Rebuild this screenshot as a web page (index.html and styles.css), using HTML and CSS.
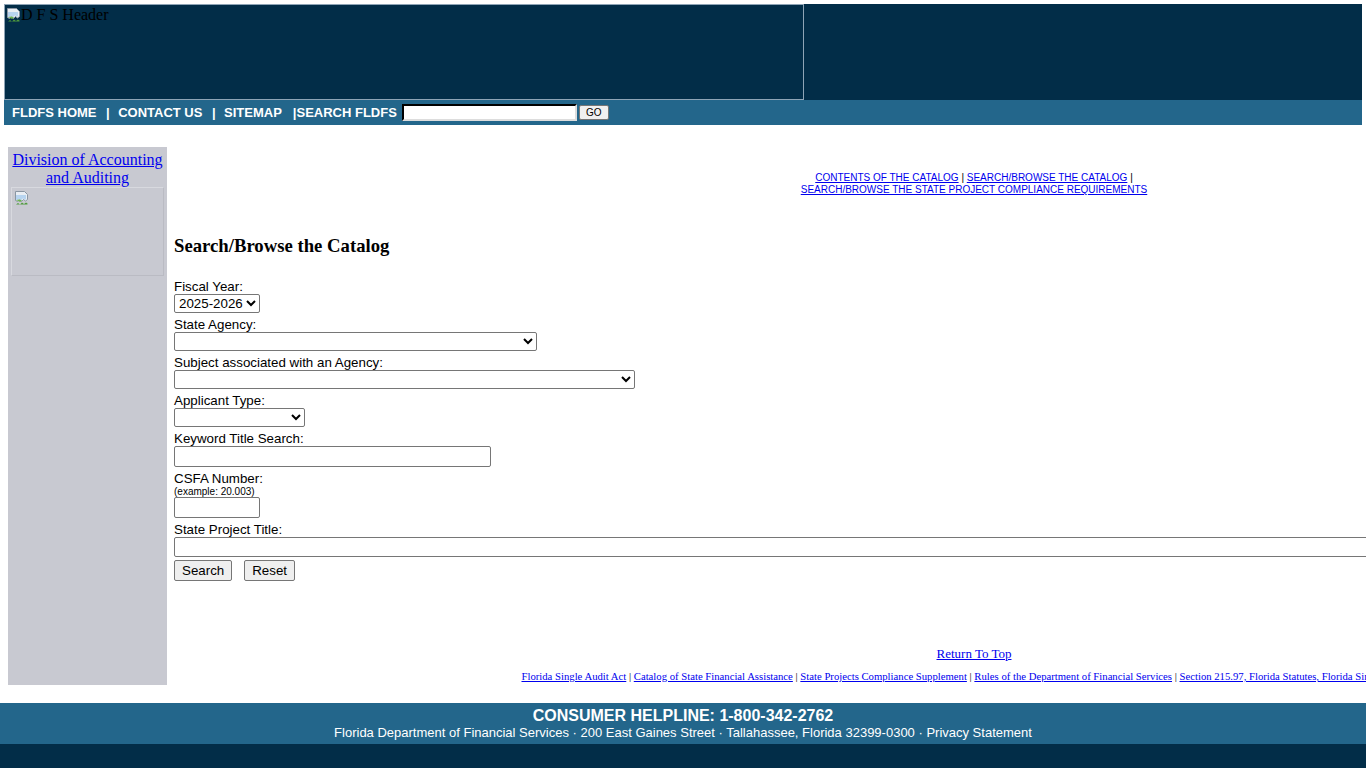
FILE: index.html
```html
<!DOCTYPE html>
<html lang="en">
<head>
    <meta charset="UTF-8">
    <title>Search/Browse the Catalog</title>
    <link rel="stylesheet" href="styles.css">
</head>
<body>
    <div class="top">
        <div class="banner">
            <div class="banner-img">
                <svg class="broken" width="16" height="16" viewBox="0 0 16 16">
                    <path d="M1.5 1.5h9l3 3v5l-2 1.5-2-1.5-2 2-2-1.5-2 1.5-2-1z" fill="#e9eef4" stroke="#8a96a3"/>
                    <path d="M2 5h10v4l-1 .7-2-1.4-2 2-2-1.4-2 1.4-1-.5z" fill="#b7d4f0"/>
                    <path d="M2 14.5l2-1.5 2 1.5 2-2 2 1.5 2-1.5 1.5 1v1H2z" fill="#4f9a3c"/>
                    <path d="M2 10.5c2-1.5 4-1.5 6 0l-2 1.6-2-1.4z" fill="#6cb34f"/>
                </svg>
                <span>D F S Header</span>
            </div>
        </div>
        <div class="nav">
            <a href="#">FLDFS HOME</a><span class="sep">|</span><a href="#">CONTACT US</a><span class="sep">|</span><a href="#">SITEMAP</a><span class="sep last">|</span><span>SEARCH FLDFS</span>
            <input class="nav-search" type="text">
            <button class="go">GO</button>
        </div>
    </div>

    <div class="page">
        <div class="sidebar">
            <a href="#" class="division">Division of Accounting and Auditing</a>
            <div class="side-img">
                <svg class="broken" width="16" height="16" viewBox="0 0 16 16">
                    <path d="M1.5 1.5h9l3 3v5l-2 1.5-2-1.5-2 2-2-1.5-2 1.5-2-1z" fill="#e9eef4" stroke="#8a96a3"/>
                    <path d="M2 5h10v4l-1 .7-2-1.4-2 2-2-1.4-2 1.4-1-.5z" fill="#b7d4f0"/>
                    <path d="M2 14.5l2-1.5 2 1.5 2-2 2 1.5 2-1.5 1.5 1v1H2z" fill="#4f9a3c"/>
                    <path d="M2 10.5c2-1.5 4-1.5 6 0l-2 1.6-2-1.4z" fill="#6cb34f"/>
                </svg>
            </div>
        </div>

        <div class="main">
            <div class="catalog-links">
                <a href="#">CONTENTS OF THE CATALOG</a> | <a href="#">SEARCH/BROWSE THE CATALOG</a> |<br>
                <a href="#">SEARCH/BROWSE THE STATE PROJECT COMPLIANCE REQUIREMENTS</a>
            </div>

            <h3>Search/Browse the Catalog</h3>

            <form class="search-form">
                <label>Fiscal Year:</label>
                <select class="sel-year"><option>2025-2026</option></select>

                <label>State Agency:</label>
                <select class="sel-agency"><option></option></select>

                <label>Subject associated with an Agency:</label>
                <select class="sel-subject"><option></option></select>

                <label>Applicant Type:</label>
                <select class="sel-applicant"><option></option></select>

                <label>Keyword Title Search:</label>
                <input class="in-keyword" type="text">

                <label>CSFA Number:</label>
                <span class="hint">(example: 20.003)</span>
                <input class="in-csfa" type="text">

                <label>State Project Title:</label>
                <input class="in-title" type="text">

                <div class="buttons">
                    <button type="button">Search</button>
                    <button type="reset">Reset</button>
                </div>
            </form>

            <div class="return-top"><a href="#">Return To Top</a></div>

            <div class="bottom-links">
                <a href="#">Florida Single Audit Act</a> | <a href="#">Catalog of State Financial Assistance</a> | <a href="#">State Projects Compliance Supplement</a> | <a href="#">Rules of the Department of Financial Services</a> | <a href="#">Section 215.97, Florida Statutes, Florida Single Audit Act</a>
            </div>
        </div>
    </div>

    <div class="footer">
        <div class="helpline">CONSUMER HELPLINE: 1-800-342-2762</div>
        <div class="address">Florida Department of Financial Services · 200 East Gaines Street · Tallahassee, Florida 32399-0300 · Privacy Statement</div>
    </div>
    <div class="footer-base"></div>
</body>
</html>
```

FILE: styles.css
```css
body {
    margin: 0;
    font-family: "Liberation Serif", "Times New Roman", serif;
    font-size: 16px;
    color: #000;
    background: #fff;
}
a {
    color: #0000ee;
}
.top {
    margin: 4px 4px 0 4px;
    background-color: #022d48;
}
.banner {
    height: 96px;
}
.banner-img {
    width: 798px;
    height: 94px;
    border: 1px solid #8ea4b6;
    display: flex;
    align-items: flex-start;
}
.banner-img span {
    line-height: 20px;
    margin-left: -1px;
    color: #000;
}
.broken {
    display: block;
    margin: 2px 0 0 1px;
}
.nav {
    background-color: #23668b;
    height: 25px;
    display: flex;
    align-items: center;
    padding-left: 8px;
    font-family: "Liberation Sans", Arial, sans-serif;
    font-size: 13px;
    font-weight: bold;
    color: #fff;
}
.nav a {
    color: #fff;
    text-decoration: none;
}
.nav .sep {
    margin: 0 8.5px 0 9.5px;
}
.nav .sep.last {
    margin: 0 0 0 11px;
}
.nav-search {
    width: 175px;
    height: 17px;
    box-sizing: border-box;
    margin-left: 5px;
    border: 2px inset #777;
    border-color: #222 #ddd #ddd #222;
    background: #fff;
    padding: 0;
}
.go {
    margin-left: 2px;
    width: 30px;
    height: 15px;
    padding: 0;
    font-size: 10px;
    font-family: "Liberation Sans", Arial, sans-serif;
    background: #f0f0f0;
    border: 1px solid #767676;
    border-radius: 2px;
    color: #000;
}
.page {
    margin-top: 22px;
    display: flex;
    align-items: flex-start;
    overflow: hidden;
}
.sidebar {
    margin-left: 8px;
    width: 159px;
    flex-shrink: 0;
    height: 538px;
    background-color: #c8c9d1;
    display: flex;
    flex-direction: column;
    align-items: center;
}
.division {
    text-align: center;
    line-height: 18px;
    margin-top: 4px;
    padding: 0 4px;
}
.side-img {
    margin-top: 0;
    width: 151px;
    height: 87px;
    border: 1px solid #d8d9df;
    border-right-color: #babbc3;
    border-bottom-color: #babbc3;
}
.side-img .broken {
    margin: 2px 0 0 2px;
}
.main {
    width: 1600px;
    height: 538px;
    flex-shrink: 0;
    padding-left: 7px;
    font-family: "Liberation Sans", Arial, sans-serif;
    font-size: 13.33px;
}
.catalog-links {
    margin-top: 25px;
    text-align: center;
    font-size: 10px;
    line-height: 12px;
}
.main h3 {
    font-family: "Liberation Serif", "Times New Roman", serif;
    font-size: 18.72px;
    line-height: 22px;
    margin: 39px 0 0 0;
}
.search-form {
    margin-top: 22px;
    display: flex;
    flex-direction: column;
    align-items: flex-start;
}
.search-form label {
    line-height: 15px;
}
.search-form select {
    height: 19px;
    font-family: "Liberation Sans", Arial, sans-serif;
    font-size: 13.33px;
    margin-bottom: 4px;
    padding: 0;
    border: 1px solid #767676;
    border-radius: 2px;
    background: #fff;
    color: #000;
}
.sel-year { width: 86px; }
.sel-agency { width: 363px; }
.sel-subject { width: 461px; }
.sel-applicant { width: 131px; }
.search-form input {
    height: 21px;
    box-sizing: border-box;
    border: 1px solid #767676;
    border-radius: 2px;
    margin-bottom: 4px;
}
.in-keyword { width: 317px; }
.in-csfa { width: 86px; }
.search-form .in-title {
    width: 1400px;
    height: 20px;
    margin-bottom: 3px;
}
.hint {
    font-size: 10px;
    line-height: 11px;
}
.buttons {
    display: flex;
    gap: 12px;
}
.buttons button {
    height: 21px;
    font-family: "Liberation Sans", Arial, sans-serif;
    font-size: 13.33px;
    padding: 1px 7px;
    background: #efefef;
    border: 1px solid #767676;
    border-radius: 2px;
    color: #000;
}
.return-top {
    margin-top: 65px;
    text-align: center;
    font-family: "Liberation Serif", "Times New Roman", serif;
    font-size: 13px;
    line-height: 16px;
}
.bottom-links {
    margin-top: 8px;
    text-align: center;
    white-space: nowrap;
    font-family: "Liberation Serif", "Times New Roman", serif;
    font-size: 10.7px;
    line-height: 12px;
}
.footer {
    margin-top: 18px;
    background-color: #23668b;
    height: 41px;
    color: #fff;
    text-align: center;
    font-family: "Liberation Sans", Arial, sans-serif;
}
.helpline {
    padding-top: 4px;
    font-size: 16px;
    font-weight: bold;
    line-height: 17px;
}
.address {
    font-size: 13px;
    line-height: 17px;
}
.footer-base {
    background-color: #022d48;
    height: 40px;
}
```
